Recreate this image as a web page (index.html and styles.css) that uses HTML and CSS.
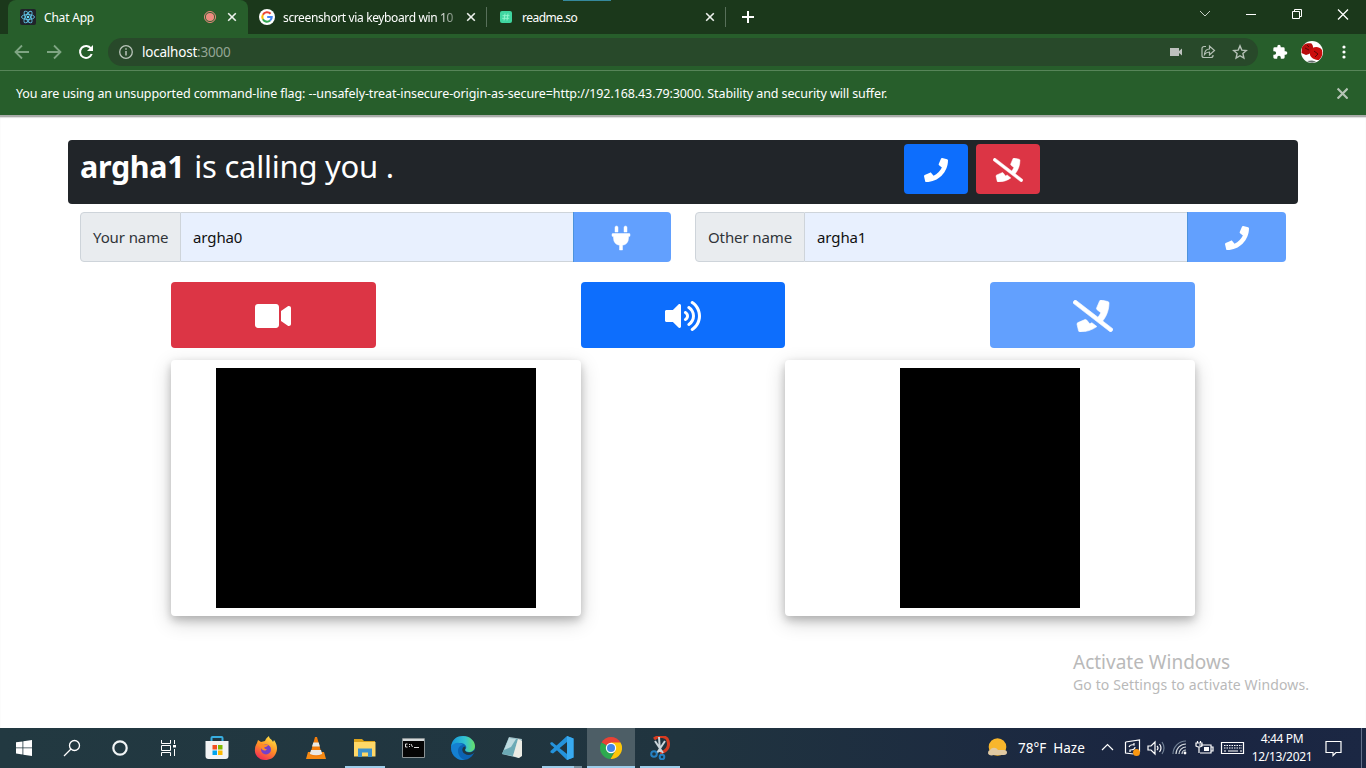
FILE: index.html
```html
<!DOCTYPE html>
<html lang="en">
<head>
<meta charset="utf-8">
<title>Chat App</title>
<link rel="stylesheet" href="styles.css">
</head>
<body>
<svg class="defs" width="0" height="0">
  <symbol id="phone" viewBox="0 0 512 512"><path d="M493.4 24.6l-104-24c-11.3-2.6-22.9 3.3-27.5 13.9l-48 112c-4.2 9.8-1.4 21.3 6.9 28l60.6 49.6c-36 76.7-98.9 140.5-177.2 177.2l-49.6-60.6c-6.8-8.3-18.2-11.1-28-6.9l-112 48C3.9 366.5-2 378.1.6 389.4l24 104C27.1 504.2 36.7 512 48 512c256.1 0 464-207.5 464-464 0-11.2-7.7-20.9-18.6-23.4z"/></symbol>
  <symbol id="phone-slash" viewBox="0 0 640 512"><path d="M268.2 381.4l-49.6-60.6c-6.8-8.3-18.2-11.1-28-6.9l-112 48c-10.7 4.6-16.5 16.1-13.9 27.5l24 104c2.5 10.8 12.1 18.6 23.4 18.6 100.7 0 193.7-32.4 269.7-86.9l-80-61.8c-10.9 6.5-22.1 12.7-33.6 18.1zm365.6 76.7L475.1 335.500C537.9 256.400 576 156.900 576 48c0-11.200-7.700-20.900-18.600-23.400l-104-24c-11.300-2.600-22.900 3.300-27.500 13.900l-48 112c-4.200 9.800-1.400 21.300 6.900 28l60.600 49.600c-12.200 26.100-27.900 50.300-46 72.800L45.500 3.400C38.500-2 28.500-.8 23 6.200L3.400 31.400c-5.400 7-4.200 17 2.800 22.400L594.500 508.600c7 5.400 17 4.200 22.500-2.800l19.600-25.300c5.400-6.800 4.100-16.900-2.900-22.400z"/></symbol>
  <symbol id="close" viewBox="0 0 10 10"><path d="M1.2 1.2l7.6 7.6M8.8 1.2L1.2 8.8" fill="none" stroke="currentColor" stroke-width="1.6"/></symbol>
</svg>

<div class="tabstrip">
  <div class="tab active">
    <svg class="fav" viewBox="0 0 16 16"><rect width="16" height="16" rx="2" fill="#20232a"/><g fill="none" stroke="#61c4e8" stroke-width=".9"><ellipse cx="8" cy="8" rx="6.5" ry="2.5"/><ellipse cx="8" cy="8" rx="6.5" ry="2.5" transform="rotate(60 8 8)"/><ellipse cx="8" cy="8" rx="6.5" ry="2.5" transform="rotate(120 8 8)"/></g><circle cx="8" cy="8" r="1.3" fill="#61dafb"/></svg>
    <span class="title t1">Chat App</span>
    <svg class="rec" viewBox="0 0 12 12"><circle cx="6" cy="6" r="5.5" fill="none" stroke="#ee8c80"/><circle cx="6" cy="6" r="4.1" fill="#ee8c80"/></svg>
    <svg class="x"><use href="#close"/></svg>
  </div>
  <div class="tab second">
    <svg class="fav" viewBox="0 0 16 16"><circle cx="8" cy="8" r="8" fill="#fff"/><g fill="none" stroke-width="2.1"><path d="M11.6 4.8A4.7 4.7 0 0 0 3.9 5.7" stroke="#ea4335"/><path d="M3.9 5.7A4.7 4.7 0 0 0 3.9 10.3" stroke="#fbbc05"/><path d="M3.9 10.3A4.7 4.7 0 0 0 11.1 11.5" stroke="#34a853"/><path d="M11.1 11.5A4.7 4.7 0 0 0 12.7 8H8.2" stroke="#4285f4"/></g></svg>
    <span class="title t2">screenshort via keyboard win 10</span>
    <svg class="x"><use href="#close"/></svg>
  </div>
  <div class="tab third">
    <svg class="fav readme" viewBox="0 0 12 12"><rect width="12" height="12" rx="2" fill="#3fd6a0"/><path d="M5 2.5L4 9.5M8 2.5L7 9.5M2.5 4.7h7M2.2 7.3h7" stroke="#8ff5cc" fill="none"/></svg>
    <span class="title t3">readme.so</span>
    <svg class="x"><use href="#close"/></svg>
  </div>
  <svg class="plus" viewBox="0 0 12 12"><path d="M6 0v12M0 6h12" stroke="#fff" stroke-width="2"/></svg>
  <svg class="winctl" viewBox="0 0 154 14" fill="none" stroke="#fff"><path d="M1 4l5 5 5-5" stroke="#c5d0c5"/><path d="M47 7.5h10"/><path d="M93.5 4.5h7v7h-7zM95.5 4.5v-2h7v7h-2"/><path d="M139 2.5l10 10M149 2.5l-10 10" stroke-width="1.3"/></svg>
  <i class="edge"></i>
</div>

<div class="toolbar">
  <svg class="nav" viewBox="0 0 80 16" fill="none" stroke="#7fa583" stroke-width="1.8"><path d="M15 8H2M8 1.5L1.5 8 8 14.5M33 8h13M40 1.5L46.5 8 40 14.5"/><path d="M77 4.5A6 6 0 1 0 77.7 10" stroke="#fff" stroke-width="2"/><path d="M79 1v6h-6z" fill="#fff" stroke="none"/></svg>
  <div class="omnibox">
    <svg class="info" viewBox="0 0 14 14"><circle cx="7" cy="7" r="6.3" fill="none" stroke="#b9c4ba" stroke-width="1.3"/><path d="M7 6v4.5M7 3.3v1.5" stroke="#b9c4ba" stroke-width="1.5"/></svg>
    <span class="url">localhost<em>:3000</em></span>
    <svg class="oicons" viewBox="0 0 78 16"><path d="M0 4h9v3l3-2.5v7L9 9v3H0z" fill="#bdc1bd"/><g fill="none" stroke="#b5c1b6" stroke-width="1.2"><path d="M36 2.5h-2a2 2 0 0 0-2 2v7a2 2 0 0 0 2 2h7a2 2 0 0 0 2-2V11"/><path d="M34.5 10.5c.3-4 2-5.500 5-5.500V2l5 4.500-5 4.500V8c-2 0-3.500.6-5 2.500z"/><path d="M70 1.9l1.8 4.200 4.500.4-3.400 3 1 4.500L70 11.700 66.100 14l1-4.500-3.400-3 4.500-.4z" stroke-width="1.4"/></g></svg>
  </div>
  <svg class="ext" viewBox="0 0 24 24"><path fill="#fff" d="M20.5 11H19V7a2 2 0 0 0-2-2h-4V3.500a2.500 2.500 0 0 0-5 0V5H4a2 2 0 0 0-2 2v3.800h1.500a2.700 2.700 0 0 1 0 5.400H2V20a2 2 0 0 0 2 2h3.800v-1.500a2.700 2.700 0 0 1 5.400 0V22H17a2 2 0 0 0 2-2v-4h1.500a2.500 2.500 0 0 0 0-5z"/></svg>
  <svg class="avatar" viewBox="0 0 22 22"><circle cx="11" cy="11" r="11" fill="#fff"/><path d="M1 6.500C3 2 7 2 10.500 2.500c2 2 2 5 1 8L8 13l-3 1-4.500-2z" fill="#b90d0d"/><path d="M9 10c2-4 8-6 12-1 1 4 0 7-3 10-4 0-8-2-9-5z" fill="#ca0d0d"/><path d="M4 7l4 2M13 10l4 3-3 3M6 4l2 2" stroke="#5c0808" fill="none"/><path d="M6 20q5 3 9 .5l-4-1z" fill="#66706c"/></svg>
  <svg class="dots" viewBox="0 0 4 14" fill="#fff"><circle cx="2" cy="2" r="1.6"/><circle cx="2" cy="7" r="1.6"/><circle cx="2" cy="12" r="1.6"/></svg>
</div>

<div class="infobar">
  <span class="warn">You are using an unsupported command-line flag: --unsafely-treat-insecure-origin-as-secure=http://192.168.43.79:3000. Stability and security will suffer.</span>
  <svg class="x"><use href="#close"/></svg>
</div>

<main class="page">
  <div class="call">
    <div class="caller"><b>argha1</b><span>is calling you .</span></div>
    <button class="btn blue small"><svg width="24" height="24"><use href="#phone"/></svg></button>
    <button class="btn red small"><svg class="bold" width="30" height="24"><use href="#phone-slash"/></svg></button>
  </div>
  <div class="names">
    <div class="group">
      <label class="l1"><span>Your name</span></label><div class="field"><span>argha0</span></div>
      <button class="btn light"><svg class="bold plug" width="18" height="24" viewBox="0 0 384 512"><path d="M320 32a32 32 0 0 0-64 0v96h64zm48 128H16a16 16 0 0 0-16 16v32a16 16 0 0 0 16 16h16v32a160.070 160.070 0 0 0 128 156.800V512h64v-99.200A160.070 160.070 0 0 0 352 256v-32h16a16 16 0 0 0 16-16v-32a16 16 0 0 0-16-16zM128 32a32 32 0 0 0-64 0v96h64z"/></svg></button>
    </div>
    <div class="group">
      <label class="l2"><span>Other name</span></label><div class="field"><span>argha1</span></div>
      <button class="btn light"><svg width="24" height="24"><use href="#phone"/></svg></button>
    </div>
  </div>
  <div class="controls">
    <button class="btn red"><svg class="camera" width="36" height="32" viewBox="0 0 576 512"><path d="M336.2 64H47.8C21.4 64 0 85.4 0 111.8v288.4C0 426.6 21.4 448 47.8 448h288.4c26.4 0 47.8-21.4 47.8-47.8V111.8c0-26.4-21.4-47.8-47.8-47.8zm189.4 37.7L416 177.3v157.4l109.6 75.5c21.2 14.6 50.4-.3 50.4-25.8V127.5c0-25.4-29.1-40.4-50.4-25.8z"/></svg></button>
    <button class="btn blue"><svg width="36" height="32" viewBox="0 0 576 512"><path d="M215.03 71.05L126.06 160H24c-13.26 0-24 10.74-24 24v144c0 13.25 10.74 24 24 24h102.06l88.97 88.95c15.03 15.03 40.97 4.47 40.97-16.97V88.02c0-21.46-25.96-31.98-40.97-16.97zm233.32-51.08c-11.17-7.33-26.18-4.24-33.51 6.95-7.34 11.17-4.22 26.18 6.95 33.51 66.27 43.49 105.82 116.6 105.82 195.58 0 78.98-39.55 152.09-105.82 195.58-11.17 7.32-14.29 22.34-6.95 33.5 7.04 10.71 21.93 14.56 33.51 6.95C528.27 439.58 576 351.33 576 256S528.27 72.43 448.35 19.97zM480 256c0-63.53-32.06-121.94-85.77-156.24-11.19-7.14-26.03-3.82-33.12 7.46s-3.78 26.21 7.41 33.36C408.27 165.97 432 209.11 432 256s-23.73 90.03-63.48 115.42c-11.19 7.14-14.5 22.07-7.41 33.36 6.51 10.36 21.12 15.14 33.12 7.46C447.94 377.94 480 319.54 480 256zm-141.77-76.87c-11.58-6.33-26.19-2.16-32.61 9.45-6.39 11.61-2.16 26.2 9.45 32.61C327.98 228.28 336 241.63 336 256c0 14.38-8.02 27.72-20.92 34.81-11.61 6.41-15.84 21-9.45 32.61 6.43 11.66 21.05 15.8 32.61 9.45 28.23-15.55 45.77-45 45.77-76.88s-17.54-61.32-45.78-76.86z"/></svg></button>
    <button class="btn light"><svg class="bold" width="40" height="32"><use href="#phone-slash"/></svg></button>
  </div>
  <div class="videos">
    <div class="card"><div class="video wide"></div></div>
    <div class="card"><div class="video tall"></div></div>
  </div>
  <div class="watermark"><p class="w1"><span>Activate Windows</span></p><p class="w2"><span>Go to Settings to activate Windows.</span></p></div>
</main>

<footer class="taskbar">
  <div class="app sys"><svg width="16" height="16" viewBox="0 0 16 16" fill="#fff"><path d="M0 2.3l6.500-.9v6.100H0zM7.300 1.300L16 0v7.500H7.300zM0 8.300h6.500v6.200L0 13.600zM7.300 8.300H16V16l-8.700-1.300z"/></svg></div>
  <div class="app sys"><svg width="18" height="18" viewBox="0 0 18 18" fill="none" stroke="#fff" stroke-width="1.3"><circle cx="11.5" cy="6.5" r="5"/><path d="M8 10l-7 7"/></svg></div>
  <div class="app sys"><svg width="18" height="18" viewBox="0 0 18 18"><circle cx="9" cy="9" r="6.7" fill="none" stroke="#f1f4f5" stroke-width="2.2"/></svg></div>
  <div class="app"><svg width="17" height="16" viewBox="0 0 17 16" fill="none" stroke="#fff"><path d="M1.500 0v3.500h9V0M1.500 16v-3.500h9V16M1.500 5.500h9v5h-9zM14.500 0v4M14.500 9v7"/><path d="M13 5h3v2.500h-3z" fill="#fff" stroke="none"/></svg></div>
  <div class="app"><svg width="24" height="24" viewBox="0 0 24 24"><path d="M6.500 6V2q0-1 1-1h9q1 0 1 1v4" fill="none" stroke="#38aee0" stroke-width="2"/><path d="M.5 5h23v15q0 3-3 3h-17q-3 0-3-3z" fill="#f2f3f4"/><path d="M7.500 9H12v4.500H7.500z" fill="#f25022"/><path d="M13 9h4.500v4.500H13z" fill="#7fba00"/><path d="M7.500 14.500H12V19H7.500z" fill="#00a4ef"/><path d="M13 14.500h4.500V19H13z" fill="#ffb900"/></svg></div>
  <div class="app"><svg width="24" height="24" viewBox="0 0 24 24"><defs><linearGradient id="ff" x1=".8" y1="0" x2=".3" y2="1"><stop stop-color="#ffe84a"/><stop offset=".5" stop-color="#ff9225"/><stop offset="1" stop-color="#f32b55"/></linearGradient></defs><path d="M3 7l1-3 3 2 4-1c1-3 3-4 4-5 0 3 3 3 4 6l1-2c3 4 4 9 2 13-2 5-6 7-11 7C5 24 0 19 1 13c0-3 1-4 2-6z" fill="url(#ff)"/><circle cx="12" cy="13.500" r="5" fill="#7640c8"/><path d="M3 8c3-1 6-.5 8 1l3-.2c0 2-3 2-4 3 1 1 2 2 3 1-1 3-5 2-6-1" fill="#ff8b2a"/></svg></div>
  <div class="app"><svg width="22" height="24" viewBox="0 0 22 24"><path d="M3 16h16l2 7H1z" fill="#f58912"/><path d="M10 1h2l5 18q-6 3-12 0z" fill="#f17c0c"/><path d="M8.300 6.500h5.400l1.200 4H7zM6 14h10l1.200 4q-6 2.500-12.400 0z" fill="#e9e9e5"/></svg></div>
  <div class="app run"><svg width="22" height="20" viewBox="0 0 22 20"><path d="M0 1h8l2 2h11v5H0z" fill="#dba31c"/><path d="M0 4h21.500v14.500H0z" fill="#ffd867"/><path d="M4 10.500h14V19h-4v-4.500H8V19H4z" fill="#3d91cc"/></svg></div>
  <div class="app"><svg width="23" height="20" viewBox="0 0 23 20"><path d="M.5.5h22v19H.5z" fill="#050505" stroke="#8b9395"/><path d="M1 1h21v2H1z" fill="#d4d9da"/><path d="M5.500 6h-2v3h2M7.500 6v1m0 1v1M9 6l1.500 3M12 9.500h5" stroke="#ddd" fill="none"/></svg></div>
  <div class="app"><svg width="24" height="24" viewBox="0 0 24 24"><defs><linearGradient id="eg" x1="0" y1=".3" x2="1" y2=".3"><stop stop-color="#1496dc"/><stop offset=".6" stop-color="#35c4cf"/><stop offset="1" stop-color="#68df65"/></linearGradient></defs><circle cx="12" cy="12" r="12" fill="#0c63b3"/><path d="M0 11C1 3 6 0 12 0c7 0 12 5 12 10 0 4-3 6-6 6-2 0-4-1-4-2s2-1 1-4c-2-4-10-4-15 1z" fill="url(#eg)"/><path d="M14 14c0 1.500 2 2.500 4 2.500 2.500 0 4.500-1 5.700-3L24 16l-2.500 2c-4 2-9 .5-10-3-.6-3 1-4 2.500-4.500 1 1.500 0 2.500 0 3.500z" fill="#213740"/><path d="M0 11c2-4 8-6 12-2-3 0-5 3-5 6 0 4 3 8 7 9C5 25 0 18 0 11z" fill="#1580d1"/></svg></div>
  <div class="app"><svg width="24" height="24" viewBox="0 0 24 24"><path d="M9 1l13 2-3 19-17-4z" fill="#a8c5cb"/><path d="M9 2l9 1-5 17-11-2z" fill="#6caab6"/><path d="M9 2l7 1-5 8-7 3z" fill="#bfdbe0"/><path d="M18 3l4 2v15l-3 2-6-2z" fill="#ecece5"/></svg></div>
  <div class="app run split"><svg width="24" height="24" viewBox="0 0 24 24"><path d="M17 0l6.500 2.500v19L17 24 3 10.500 1 9l-1-2 2-1 15 12V6L3 17.500l-2.500-1V15z" fill="#2493dc"/><path d="M17 0l6.500 2.500v19L17 24z" fill="#38aaf0"/></svg></div>
  <div class="app run current"><svg width="22" height="22" viewBox="0 0 22 22"><path d="M11 11L1.500 5.500A11 11 0 0 1 20.500 5.500z" fill="#e94235"/><path d="M11 11L1.500 5.500A11 11 0 0 0 10 22l5.500-9z" fill="#2da94f"/><path d="M11 11l4.500 2.500L10.500 22A11 11 0 0 0 20.500 5.500H11z" fill="#fdc60a"/><circle cx="11" cy="11" r="5.200" fill="#fff"/><circle cx="11" cy="11" r="4" fill="#4285e8"/></svg></div>
  <div class="app run"><svg width="20" height="24" viewBox="0 0 20 24"><path d="M4 3C9-1 17 0 18 5c2 6-2 11-8 12" fill="none" stroke="#d83b20" stroke-width="3"/><path d="M9 1l1 15M5 5l8 12M15 5L7 17" stroke="#ccd5da" stroke-width="2"/><g fill="none" stroke="#2581c3" stroke-width="2"><circle cx="4" cy="18" r="2.8"/><circle cx="12" cy="21" r="2.3"/></g></svg></div>
  <div class="tray">
    <svg class="sun" viewBox="0 0 22 20"><circle cx="10.500" cy="9" r="8.800" fill="#f8b62c"/><path d="M1 15a3 3 0 0 1 2-3c2-3 6-3 8 0h6c4 0 4 5 0 5H7c-3 1-6 0-6-2z" fill="#e0c9a2"/></svg>
    <span class="weather">78°F&nbsp; Haze</span>
    <svg class="trayicons" viewBox="0 0 144 20" fill="none" stroke="#fff" stroke-width="1.2"><path d="M1 12l5.500-5.500L12 12"/><path d="M24.500 4l14-2v12M24.500 4v11l8 1M28 9q1-3 5-2V5m1 4q0 3-5 3v2"/><circle cx="35.500" cy="14.500" r="3.500" fill="#f99710" stroke="none"/><path d="M47 8h3l4-4v12l-4-4h-3zM56 8q2 2 0 4M58.500 6q3 4 0 8"/><path d="M61 4q4 6 0 12" stroke="#718195"/><path d="M75 16A10 10 0 0 1 85 6M78 16a7 7 0 0 1 7-7M81 16a4 4 0 0 1 4-4" stroke="#d3d9de"/><path d="M72 16A13 13 0 0 1 85 3" stroke="#718195"/><circle cx="84" cy="15" r="1.400" fill="#fff" stroke="none"/><path d="M98 7h12v8H99M95 5v3q3 2 6 0V5zM96.500 5V3M99.500 5V3M98 9v6M110 9h2v4h-2"/><path d="M103 9h5v4h-5z" fill="#fff" stroke="none"/><path d="M120.500 4.500h22v11h-22z"/><path d="M123 7.500h18M123 10h18" stroke-dasharray="1.500 1"/><path d="M123 13h2M127 13h10M139 13h2"/></svg>
    <div class="clock"><span class="time">4:44 PM</span><span class="date">12/13/2021</span></div>
    <svg class="note" viewBox="0 0 17 17" fill="none" stroke="#fff" stroke-width="1.2"><path d="M1 1.500h15v11h-5L8 15.500v-3H1z"/></svg>
    <i class="desk"></i>
  </div>
</footer>
</body>
</html>
```
FILE: styles.css
```css
* { box-sizing: border-box; }
body { margin: 0; width: 1366px; height: 768px; overflow: hidden; display: flex; flex-direction: column; background: #fff; font-family: "Noto Sans", "Open Sans", sans-serif; font-size: 12px; color: #fff; }
.defs { position: absolute; }
svg { display: block; flex: none; }
span { white-space: nowrap; }
.tabstrip { position: relative; height: 34px; background: #1b381b; display: flex; align-items: center; padding-left: 8px; flex: none; }
.edge { position: absolute; left: 563px; top: 0; width: 48px; height: 1px; background: #35899c; }
.tab { height: 34px; display: flex; align-items: center; }
.active { width: 240px; background: #275e2b; border-radius: 8px 8px 0 0; padding: 0 11px 0 12px; }
.second { width: 239px; padding: 0 11px 0 11px; }
.third { width: 239px; padding: 0 11px 0 13px; position: relative; }
.third::before, .third::after { content: ""; position: absolute; left: -1px; top: 7px; width: 1px; height: 20px; background: #58705a; }
.third::after { left: 238px; }
.fav { width: 16px; height: 16px; }
.readme { width: 12px; height: 12px; }
.title { margin-left: 8px; flex: 1; font-size: 12px; letter-spacing: -.2px; }
.t2 { flex: 0 0 172px; overflow: hidden; margin-right: auto; letter-spacing: -.37px; -webkit-mask-image: linear-gradient(90deg, #000 155px, rgba(0,0,0,.35) 172px); }
.t3 { margin-left: 10px; letter-spacing: -.5px; }
.x { width: 10px; height: 10px; color: #eef2ee; }
.rec { width: 12px; height: 12px; margin-right: 12px; }
.active .rec { position: relative; left: 1px; }
.plus { width: 12px; height: 12px; margin-left: 16px; }
.winctl { width: 154px; height: 14px; margin-left: 445px; margin-bottom: 6px; }
.toolbar { height: 37px; background: #275e2b; border-bottom: 1px solid #578559; display: flex; align-items: center; padding: 0 0 1px 14px; flex: none; }
.nav { width: 80px; height: 16px; }
.omnibox { width: 1150px; height: 28px; margin-left: 14px; border-radius: 14px; background: #28492a; display: flex; align-items: center; padding: 0 10px 0 11px; }
.info { width: 14px; height: 14px; }
.url { margin-left: 9px; font-size: 13.5px; letter-spacing: -.22px; flex: 1; }
.url em { font-style: normal; color: #94a695; }
.oicons { width: 78px; height: 16px; }
.ext { width: 16px; height: 16px; margin-left: 14px; }
.avatar { width: 22px; height: 22px; margin-left: 13px; }
.dots { width: 4px; height: 14px; margin-left: 19px; }
.infobar { height: 44px; background: #275e2b; display: flex; align-items: center; justify-content: space-between; padding: 0 18px 0 16px; flex: none; }
.warn { font-size: 12.5px; letter-spacing: -.1px; }
.infobar .x { color: #b5c4b6; width: 12px; height: 12px; }
.infobar .x use { transform: scale(1.1); }
.page { height: 613px; padding: 23px 68px 0; border-top: 2px solid #a9aba9; box-shadow: inset 0 1px 1px #ddd; display: flex; flex-direction: column; flex: none; }
.call { height: 64px; background: #212529; border-radius: 4px; display: flex; gap: 8px; padding: 4px 12px; }
.caller { width: 816px; font-size: 31px; line-height: 44px; display: flex; gap: 10px; letter-spacing: -.25px; }
.caller b { font-size: 30.5px; letter-spacing: -.35px; }
.btn { border: 0; border-radius: 4px; padding: 2px 0 0; display: flex; align-items: center; justify-content: center; height: 66px; fill: #fff; }
.bold { stroke: #fff; stroke-width: 10px; overflow: visible; }
.plug { margin-right: 2px; }
.camera { margin-right: 1px; }
.blue { background: #0d6efd; }
.red { background: #dc3545; }
.light { background: #62a0fe; }
.btn.small { width: 64px; height: 50px; }
.names { display: grid; grid-template-columns: 591px 591px; gap: 24px; padding: 8px 12px 0; }
.group { display: flex; height: 50px; color: #111; }
.group label { background: #e9ecef; border: 1px solid #ced4da; border-radius: 4px 0 0 4px; padding-left: 12px; line-height: 48px; width: 101px; color: #303439; }
.group .l2 { width: 110px; }
.field { flex: 1; background: #e8f0fe; border: solid #ced4da; border-width: 1px 0; padding-left: 12px; line-height: 48px; }
.group .btn { width: 98px; height: 50px; border-left: 1px solid #4d93dc; border-radius: 0 4px 4px 0; padding-right: 1px; }
.group:last-child .btn { width: 99px; }
.group label, .field { font-size: 15px; letter-spacing: -.1px; }
.controls { display: flex; justify-content: space-between; padding: 20px 103px 0; }
.controls .btn { width: 205px; }
.controls .btn.blue { width: 204px; margin-right: 1px; }
.videos { display: flex; justify-content: space-between; padding: 12px 103px 0; }
.card { width: 410px; height: 256px; background: #fff; border-radius: 4px; display: flex; justify-content: center; padding-top: 8px; box-shadow: 0 4px 8px rgba(0,0,0,.2), 0 6px 20px rgba(0,0,0,.19); }
.video { height: 240px; background: #000; }
.wide { width: 320px; }
.tall { width: 180px; }
.watermark { align-self: flex-end; width: 225px; margin-top: 33px; color: #b9b9b9; }
.watermark p { margin: 0; }
.w1 { font-size: 19px; line-height: 26px; }
.w2 { font-size: 14px; line-height: 20px; letter-spacing: .12px; }
.taskbar { height: 40px; display: flex; background: linear-gradient(90deg, #223941, #20343f 50%, #1a2541 85%, #1b2743); flex: none; }
.app { width: 48px; height: 40px; display: flex; align-items: center; justify-content: center; margin-right: 1.2px; }
.app.sys { margin-right: 0; }
.run { background: linear-gradient(#9dcdea, #9dcdea) bottom center / 40px 2px no-repeat; }
.split { background: linear-gradient(90deg, #9dcdea 32px, #77919f 32px) bottom center / 40px 2px no-repeat; }
.current { background: linear-gradient(#9dcdea, #9dcdea) bottom / 48px 2px no-repeat, #4d5e66; }
.tray { display: flex; align-items: center; margin-left: auto; padding-right: 4px; }
.sun { width: 22px; height: 20px; }
.weather { margin-left: 9px; width: 83px; font-size: 13.5px; }
.trayicons { width: 144px; height: 20px; }
.clock { width: 74px; display: flex; flex-direction: column; align-items: center; line-height: 18px; font-size: 12px; letter-spacing: -.35px; }
.note { width: 17px; height: 17px; margin-left: 6px; }
.desk { width: 1px; height: 40px; background: #64708a; margin-left: 19px; }
```
